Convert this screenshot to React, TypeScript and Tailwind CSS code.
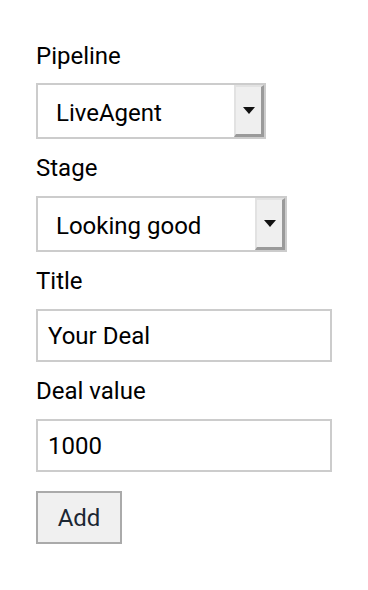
const font = { fontFamily: 'Roboto, "Liberation Sans", sans-serif' };

function Label({ text }: { text: string }) {
  return <div className="text-[24px] leading-7 text-black">{text}</div>;
}

function Select({ value, width }: { value: string; width: string }) {
  return (
    <div className={`flex h-[56px] border-2 border-[#cccccc] bg-white ${width}`}>
      <div className="flex flex-1 items-center pl-[18px] pt-[3px] text-[24px] text-black">{value}</div>
      <div className="flex w-[30px] items-center justify-center border-t-2 border-l-2 border-r-[3px] border-b-[3px] border-t-[#e2e2e2] border-l-[#e2e2e2] border-r-[#9a9a9a] border-b-[#9a9a9a] bg-[#efefef]">
        <svg width="12" height="7" viewBox="0 0 12 7">
          <path d="M0 0h12L6 7z" fill="#111" />
        </svg>
      </div>
    </div>
  );
}

function Input({ value }: { value: string }) {
  return (
    <div className="flex h-[53px] w-[296px] items-center border-2 border-[#cccccc] bg-white pl-[10px] text-[24px] text-black">
      {value}
    </div>
  );
}

export default function App() {
  return (
    <div className="min-h-[590px] bg-white pl-[36px] pt-[42px]" style={font}>
      <Label text="Pipeline" />
      <div className="mt-[13px]">
        <Select value="LiveAgent" width="w-[230px]" />
      </div>
      <div className="mt-[15px]">
        <Label text="Stage" />
      </div>
      <div className="mt-[14px]">
        <Select value="Looking good" width="w-[251px]" />
      </div>
      <div className="mt-[15px]">
        <Label text="Title" />
      </div>
      <div className="mt-[14px]">
        <Input value="Your Deal" />
      </div>
      <div className="mt-[15px]">
        <Label text="Deal value" />
      </div>
      <div className="mt-[14px]">
        <Input value="1000" />
      </div>
      <button className="mt-[19px] flex h-[53px] w-[86px] items-center justify-center border-2 border-[#aaaaaa] bg-[#f0f0f0] text-[24px] text-[#1c2733]">
        Add
      </button>
    </div>
  );
}
